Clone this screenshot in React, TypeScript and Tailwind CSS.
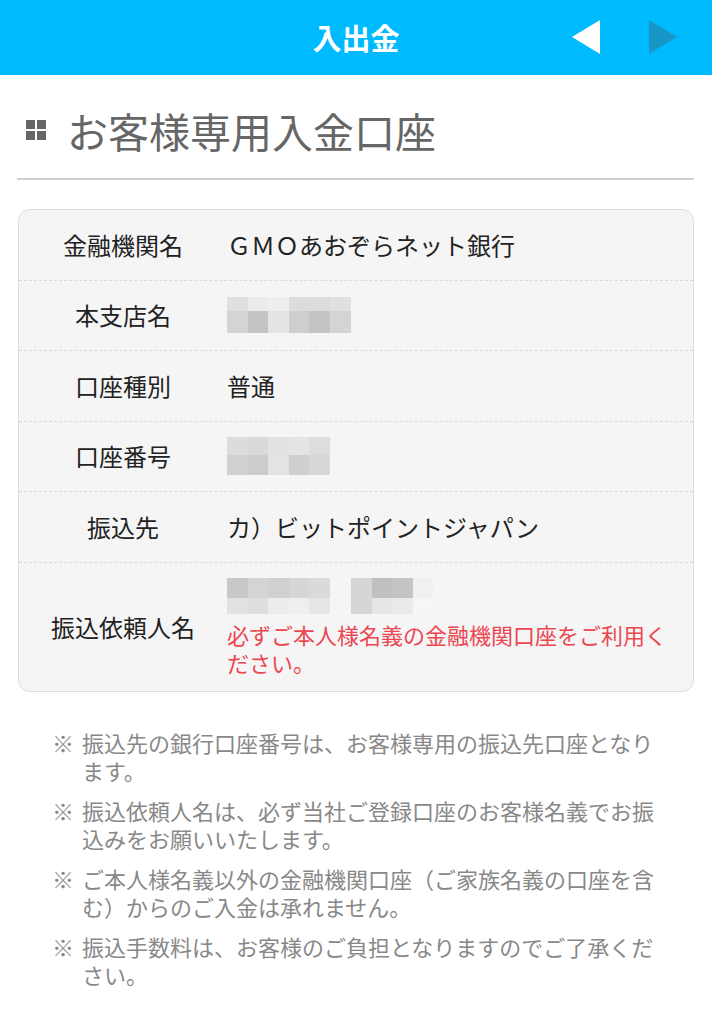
import React from "react";

const font = { fontFamily: '"Noto Sans CJK JP", "Noto Sans", sans-serif' };

// pixelated (masked) blocks: rows of cell colours
const branchBlur = [
  ["bg-[#e0e0e0]", "bg-[#ebebeb]", "bg-[#eeeeee]", "bg-[#dcdcdc]", "bg-[#dcdcdc]", "bg-[#e0e0e0]"],
  ["bg-[#d4d4d4]", "bg-[#c4c4c4]", "bg-[#e4e4e4]", "bg-[#cecece]", "bg-[#c4c4c4]", "bg-[#d4d4d4]"],
];
const numberBlur = [
  ["bg-[#dcdcdc]", "bg-[#d9d9d9]", "bg-[#e2e2e2]", "bg-[#e4e4e4]", "bg-[#dddddd]"],
  ["bg-[#d0d0d0]", "bg-[#cccccc]", "bg-[#e3e3e3]", "bg-[#cfcfcf]", "bg-[#d7d7d7]"],
];
const nameBlurA = [
  ["bg-[#c8c8c8]", "bg-[#d4d4d4]", "bg-[#d0d0d0]", "bg-[#d6d6d6]", "bg-[#dadada]"],
  ["bg-[#e2e2e2]", "bg-[#dedede]", "bg-[#ececec]", "bg-[#eeeeee]", "bg-[#e6e6e6]"],
];
const nameBlurB = [
  ["bg-[#d6d6d6]", "bg-[#c0c0c0]", "bg-[#c4c4c4]", "bg-[#f0f0f0]"],
  ["bg-[#d6d6d6]", "bg-[#e6e6e6]", "bg-[#eaeaea]", "bg-[#f6f6f6]"],
];

const Blur = ({ cells, top, bottom }: { cells: string[][]; top: string; bottom: string }) => (
  <div className="flex flex-col">
    {cells.map((row, i) => (
      <div key={i} className={`flex ${i === 0 ? top : bottom}`}>
        {row.map((c, j) => (
          <div key={j} className={`w-[20.6px] h-full ${c}`} />
        ))}
      </div>
    ))}
  </div>
);

const Row = ({ label, children, last }: { label: string; children: React.ReactNode; last?: boolean }) => (
  <div
    className={`flex items-center ${last ? "py-[15px]" : "h-[70.5px] border-b border-dashed border-[#dadada]"}`}
  >
    <div className="w-[208px] shrink-0 text-center text-[24px] text-[#222]">{label}</div>
    <div className="flex-1 pr-[20px] text-[24px] text-[#222]">{children}</div>
  </div>
);

const notes = [
  "振込先の銀行口座番号は、お客様専用の振込先口座となります。",
  "振込依頼人名は、必ず当社ご登録口座のお客様名義でお振込みをお願いいたします。",
  "ご本人様名義以外の金融機関口座（ご家族名義の口座を含む）からのご入金は承れません。",
  "振込手数料は、お客様のご負担となりますのでご了承ください。",
];

const App = () => {
  return (
    <div className="w-[712px] min-h-[1024px] bg-white" style={font}>
      <header className="h-[75px] bg-[#00baff] flex items-center relative">
        <h1 className="flex-1 text-center text-white font-bold text-[29px] leading-none">入出金</h1>
        <div className="absolute right-[35px] top-[20px] flex gap-[49px]">
          <svg width="28" height="34" viewBox="0 0 28 34">
            <polygon points="28,0 28,34 0,17" fill="#ffffff" />
          </svg>
          <svg width="28" height="34" viewBox="0 0 28 34">
            <polygon points="0,0 0,34 28,17" fill="#1896c8" />
          </svg>
        </div>
      </header>

      <div className="pl-[17px] pr-[18px]">
        <div className="flex items-center pt-[26px] pb-[19px]">
          <div className="grid grid-cols-2 gap-[2px] ml-[9px] mr-[21px]">
            <div className="w-[9px] h-[9px] bg-[#666]" />
            <div className="w-[9px] h-[9px] bg-[#666]" />
            <div className="w-[9px] h-[9px] bg-[#666]" />
            <div className="w-[9px] h-[9px] bg-[#666]" />
          </div>
          <h2 className="text-[41px] leading-[58px] text-[#666]">お客様専用入金口座</h2>
        </div>
        <div className="h-[2px] bg-[#cfcfcf]" />

        <div className="mt-[29px] ml-[1px] bg-[#f5f5f5] border border-[#dcdcdc] rounded-[12px]">
          <Row label="金融機関名">ＧＭＯあおぞらネット銀行</Row>
          <Row label="本支店名">
            <Blur cells={branchBlur} top="h-[14px]" bottom="h-[22px]" />
          </Row>
          <Row label="口座種別">普通</Row>
          <Row label="口座番号">
            <Blur cells={numberBlur} top="h-[18px]" bottom="h-[20px]" />
          </Row>
          <Row label="振込先">カ）ビットポイントジャパン</Row>
          <Row label="振込依頼人名" last>
            <div className="flex gap-[21px]">
              <Blur cells={nameBlurA} top="h-[20px]" bottom="h-[16px]" />
              <Blur cells={nameBlurB} top="h-[20px]" bottom="h-[16px]" />
            </div>
            <p className="mt-[6px] text-[22px] leading-[28px] text-[#ec4651]">
              必ずご本人様名義の金融機関口座をご利用ください。
            </p>
          </Row>
        </div>
      </div>

      <ul className="pl-[52px] pr-[52px] mt-[36px] pb-[30px] flex flex-col gap-[12px]">
        {notes.map((n) => (
          <li key={n} className="flex text-[22px] leading-[28px] text-[#888]">
            <span className="w-[30px] shrink-0">※</span>
            <span>{n}</span>
          </li>
        ))}
      </ul>
    </div>
  );
};

export default App;
